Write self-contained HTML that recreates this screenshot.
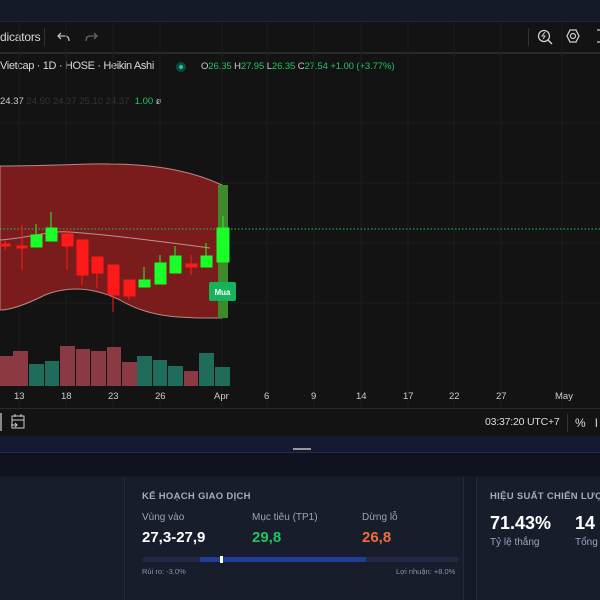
<!DOCTYPE html>
<html><head><meta charset="utf-8"><style>
*{margin:0;padding:0;box-sizing:border-box}
body{width:600px;height:600px;overflow:hidden;background:#0f1320;font-family:"Liberation Sans","Noto Sans CJK SC",sans-serif;position:relative}
.a{position:absolute;white-space:nowrap}
</style></head><body>
<div class="a" style="left:0;top:0;width:600px;height:22px;background:#141a27;border-bottom:1px solid #1e2336"></div>
<div class="a" style="left:0;top:23px;width:600px;height:413px;background:#131313"></div>
<div class="a" style="left:0;top:52px;width:600px;height:2px;background:#2a2a2a"></div>
<div class="a" style="left:0;top:30px;font-size:12px;color:#d8d8d8;letter-spacing:-0.2px">dicators</div>
<div class="a" style="left:44px;top:28px;width:1px;height:18px;background:#333"></div>
<svg class="a" style="left:56px;top:30px" width="50" height="16"><path d="M4 6 L1 3 L4 0 M1 3 H8 Q12 3 12 8" stroke="#bbb" fill="none" stroke-width="1.3" transform="translate(1,3)"/><path d="M38 6 L41 3 L38 0 M41 3 H34 Q30 3 30 8" stroke="#666" fill="none" stroke-width="1.3" transform="translate(0,3)"/></svg>
<div class="a" style="left:528px;top:28px;width:1px;height:18px;background:#333"></div>
<svg class="a" style="left:536px;top:27px" width="64" height="20"><circle cx="8" cy="9" r="5.5" stroke="#ccc" fill="none" stroke-width="1.3"/><path d="M12 13 L16 17" stroke="#ccc" stroke-width="1.5"/><path d="M9 5 L6 9 H9 L7 12" stroke="#ccc" fill="none"/><path d="M34 3 L40 3 L43 9 L40 15 L34 15 L31 9Z" stroke="#ccc" fill="none" stroke-width="1.3"/><circle cx="37" cy="9" r="2.5" stroke="#ccc" fill="none" stroke-width="1.2"/><path d="M61 3 H64 M61 15 H64" stroke="#ccc" stroke-width="1.3"/></svg>
<div class="a" style="left:0;top:60px;font-size:11px;color:#d8d8d8;letter-spacing:-0.35px;width:165px;overflow:hidden">Vietcap · 1D · HOSE · Heikin Ashi</div>
<div class="a" style="left:176px;top:62px;width:10px;height:10px;border-radius:50%;background:#0f4a3e"></div>
<div class="a" style="left:179px;top:65px;width:4px;height:4px;border-radius:50%;background:#22c5a0"></div>
<div class="a" style="left:201px;top:61px;font-size:9.5px;color:#ccc;letter-spacing:-0.1px">O<span style="color:#22c55e">26.35</span> H<span style="color:#22c55e">27.95</span> L<span style="color:#22c55e">26.35</span> C<span style="color:#22c55e">27.54 +1.00 (+3.77%)</span></div>
<div class="a" style="left:0;top:96px;font-size:9.5px;color:#ccc">24.37 <span style="color:#333">24.50 24.37 25.10 24.37</span> <span style="color:#22c55e">&nbsp;1.00</span> ø</div>
<svg class="a" style="left:0;top:23px" width="600" height="386">
<g stroke="#1c1c1c" stroke-width="1"><path d="M19 0V385M66 0V385M113 0V385M160 0V385M222 0V385M267 0V385M314 0V385M361 0V385M408 0V385M454 0V385M501 0V385M562 0V385"/><path d="M0 100H600M0 160H600M0 220H600M0 280H600"/></g>
<g transform="translate(0,-23)">
<path d="M0 166 C60 166 90 163 110 164 C150 164 190 170 222 185 L222 318 C180 318 150 318 120 300 C95 288 70 285 45 295 C25 305 10 310 0 310Z" fill="#7b1c1c" stroke="#b88" stroke-width="1"/>
<rect x="218" y="185" width="10" height="133" fill="#3e8a2a"/>
<path d="M0 240 C30 238 50 230 70 232 C110 235 150 240 210 248" stroke="#c09090" fill="none" stroke-width="1"/>
<path d="M0 229H600" stroke="#22c55e" stroke-dasharray="1.5 2" stroke-width="1"/>
<g fill="#ff1a1a" stroke="#ff1a1a">
<path d="M5 240V250M22 225V270M67 228V270M82 240V285M97 257V288M113 265V312M129 280V300M191 255V275" stroke-width="1"/>
<rect x="0" y="244" width="10" height="2"/><rect x="17" y="246" width="10" height="2"/>
<rect x="62" y="234" width="11" height="12"/><rect x="77" y="240" width="11" height="35"/><rect x="92" y="257" width="11" height="16"/><rect x="108" y="265" width="11" height="30"/><rect x="124" y="280" width="11" height="16"/><rect x="186" y="264" width="11" height="3"/>
</g>
<g fill="#1aff2a" stroke="#1aff2a">
<path d="M36 224V247M51 212V241M144 267V287M160 255V284M175 246V273M206 243V267M223 216V262" stroke-width="1"/>
<rect x="31" y="235" width="11" height="12"/><rect x="46" y="228" width="11" height="13"/><rect x="139" y="280" width="11" height="7"/><rect x="155" y="263" width="11" height="21"/><rect x="170" y="256" width="11" height="17"/><rect x="201" y="256" width="11" height="11"/><rect x="217" y="228" width="12" height="34"/>
</g>
<rect x="209" y="282" width="27" height="19" rx="2" fill="#17b35a"/>
<text x="222.5" y="295" font-size="8" font-weight="bold" fill="#fff" text-anchor="middle" font-family="Liberation Sans">Mua</text>
<g fill="#8b3a44"><rect x="0" y="356" width="13" height="30"/><rect x="13" y="351" width="15" height="35"/><rect x="60" y="346" width="15" height="40"/><rect x="76" y="349" width="14" height="37"/><rect x="91" y="351" width="15" height="35"/><rect x="107" y="347" width="14" height="39"/><rect x="122" y="362" width="15" height="24"/><rect x="184" y="371" width="14" height="15"/></g>
<g fill="#1f6b5c"><rect x="29" y="364" width="15" height="22"/><rect x="45" y="361" width="14" height="25"/><rect x="137" y="356" width="15" height="30"/><rect x="153" y="360" width="14" height="26"/><rect x="168" y="366" width="15" height="20"/><rect x="199" y="353" width="15" height="33"/><rect x="215" y="367" width="15" height="19"/></g>
</g></svg>
<div class="a" style="left:0;top:385px;width:600px;height:24px;font-size:9.5px;color:#ccc">
<span class="a" style="left:14px;top:6px">13</span><span class="a" style="left:61px;top:6px">18</span><span class="a" style="left:108px;top:6px">23</span><span class="a" style="left:155px;top:6px">26</span><span class="a" style="left:214px;top:6px">Apr</span><span class="a" style="left:264px;top:6px">6</span><span class="a" style="left:311px;top:6px">9</span><span class="a" style="left:356px;top:6px">14</span><span class="a" style="left:403px;top:6px">17</span><span class="a" style="left:449px;top:6px">22</span><span class="a" style="left:496px;top:6px">27</span><span class="a" style="left:555px;top:6px">May</span></div>
<div class="a" style="left:0;top:408px;width:600px;height:1px;background:#2a2a2a"></div>
<div class="a" style="left:0;top:413px;width:2px;height:18px;background:#888"></div>
<svg class="a" style="left:10px;top:413px" width="16" height="18"><rect x="2" y="3" width="12" height="12" stroke="#ccc" fill="none"/><path d="M2 7H14M5 1V4M11 1V4M1 12H7M5 10L7 12L5 14" stroke="#ccc" fill="none"/></svg>
<div class="a" style="left:485px;top:416px;font-size:10.5px;color:#ddd;letter-spacing:-0.2px">03:37:20 UTC+7</div>
<div class="a" style="left:567px;top:414px;width:1px;height:18px;background:#333"></div>
<div class="a" style="left:575px;top:416px;font-size:12px;color:#ddd">%</div>
<div class="a" style="left:595px;top:416px;font-size:12px;color:#ddd">l</div>
<div class="a" style="left:0;top:436px;width:600px;height:16px;background:#151a33"></div>
<div class="a" style="left:0;top:452px;width:600px;height:1px;background:#242a48"></div>
<div class="a" style="left:293px;top:448px;width:18px;height:2px;background:#999"></div>
<div class="a" style="left:0;top:453px;width:600px;height:23px;background:#10131f"></div>
<div class="a" style="left:0;top:476px;width:600px;height:124px;background:#141928"></div>
<div class="a" style="left:0;top:477px;width:125px;height:123px;background:#181d2c;border-right:1px solid #232a3b"></div>
<div class="a" style="left:126px;top:477px;width:338px;height:123px;background:#181d2c;border-right:1px solid #232a3b"></div>
<div class="a" style="left:476px;top:477px;width:124px;height:123px;background:#181d2c;border-left:1px solid #232a3b"></div>
<div class="a" style="left:142px;top:491px;font-size:9.5px;font-weight:bold;color:#a3abbd;letter-spacing:.3px">KẾ HOẠCH GIAO DỊCH</div>
<div class="a" style="left:142px;top:512px;font-size:10px;color:#9aa3b5">Vùng vào</div>
<div class="a" style="left:252px;top:512px;font-size:10px;color:#9aa3b5">Mục tiêu (TP1)</div>
<div class="a" style="left:362px;top:512px;font-size:10px;color:#9aa3b5">Dừng lỗ</div>
<div class="a" style="left:142px;top:529px;font-size:15px;font-weight:bold;color:#fff">27,3-27,9</div>
<div class="a" style="left:252px;top:529px;font-size:15px;font-weight:bold;color:#22c55e">29,8</div>
<div class="a" style="left:362px;top:529px;font-size:15px;font-weight:bold;color:#f26b3a">26,8</div>
<div class="a" style="left:142px;top:557px;width:317px;height:5px;border-radius:3px;background:#212a42"></div>
<div class="a" style="left:200px;top:557px;width:166px;height:5px;background:#1f3d96"></div>
<div class="a" style="left:220px;top:556px;width:3px;height:7px;background:#fff"></div>
<div class="a" style="left:142px;top:567px;font-size:7.5px;color:#8a93a5">Rủi ro: -3.0%</div>
<div class="a" style="left:396px;top:567px;font-size:7.5px;color:#8a93a5">Lợi nhuận: +8.0%</div>
<div class="a" style="left:490px;top:491px;font-size:9.5px;font-weight:bold;color:#a3abbd;letter-spacing:.3px">HIỆU SUẤT CHIẾN LƯỢC</div>
<div class="a" style="left:490px;top:513px;font-size:18px;font-weight:bold;color:#fff">71.43%</div>
<div class="a" style="left:575px;top:513px;font-size:18px;font-weight:bold;color:#fff">14</div>
<div class="a" style="left:490px;top:537px;font-size:10px;color:#9aa3b5">Tỷ lệ thắng</div>
<div class="a" style="left:575px;top:537px;font-size:10px;color:#9aa3b5">Tổng</div>
</body></html>
